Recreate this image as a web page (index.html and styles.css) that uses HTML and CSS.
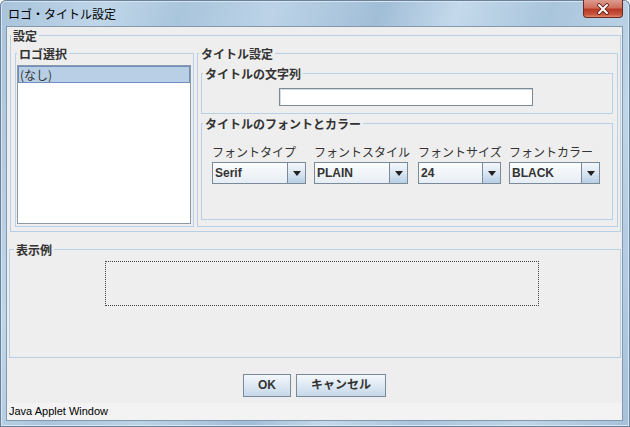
FILE: index.html
```html
<!DOCTYPE html>
<html lang="ja">
<head>
    <meta charset="UTF-8">
    <title>ロゴ・タイトル設定</title>
    <link rel="stylesheet" href="styles.css">
</head>
<body>
    <div class="window">
        <div class="titlebar">
            <span class="title">ロゴ・タイトル設定</span>
            <div class="close-btn">
                <svg width="14" height="12" viewBox="0 0 14 12">
                    <path d="M3 2 L11 10 M11 2 L3 10" stroke="#5a1a12" stroke-width="3.6" stroke-linecap="round"/>
                    <path d="M3 2 L11 10 M11 2 L3 10" stroke="#ffffff" stroke-width="2" stroke-linecap="round"/>
                </svg>
            </div>
        </div>

        <div class="client">
            <!-- 設定 -->
            <fieldset class="group group-settings">
                <legend>設定</legend>
                <div class="settings-body">
                    <fieldset class="group group-logo">
                        <legend>ロゴ選択</legend>
                        <div class="logo-body">
                            <div class="list">
                                <div class="list-item selected">(なし)</div>
                            </div>
                        </div>
                    </fieldset>

                    <fieldset class="group group-title">
                        <legend>タイトル設定</legend>
                        <div class="title-body">
                            <fieldset class="group">
                                <legend>タイトルの文字列</legend>
                                <div class="string-body">
                                    <div class="textfield"></div>
                                </div>
                            </fieldset>

                            <fieldset class="group group-font">
                                <legend>タイトルのフォントとカラー</legend>
                                <div class="font-body">
                                    <div class="font-col">
                                        <div class="font-label">フォントタイプ</div>
                                        <div class="combo"><span class="combo-value">Serif</span><span class="combo-arrow"></span></div>
                                    </div>
                                    <div class="font-col">
                                        <div class="font-label">フォントスタイル</div>
                                        <div class="combo combo-style"><span class="combo-value">PLAIN</span><span class="combo-arrow"></span></div>
                                    </div>
                                    <div class="font-col">
                                        <div class="font-label">フォントサイズ</div>
                                        <div class="combo"><span class="combo-value">24</span><span class="combo-arrow"></span></div>
                                    </div>
                                    <div class="font-col">
                                        <div class="font-label">フォントカラー</div>
                                        <div class="combo"><span class="combo-value">BLACK</span><span class="combo-arrow"></span></div>
                                    </div>
                                </div>
                            </fieldset>
                        </div>
                    </fieldset>
                </div>
            </fieldset>

            <!-- 表示例 -->
            <fieldset class="group group-preview">
                <legend>表示例</legend>
                <div class="preview-body">
                    <div class="preview-box"></div>
                </div>
            </fieldset>

            <div class="buttons">
                <div class="btn">OK</div>
                <div class="btn">キャンセル</div>
            </div>

            <div class="statusbar">Java Applet Window</div>
        </div>
    </div>
</body>
</html>
```

FILE: styles.css
```css
* {
    box-sizing: border-box;
}

body {
    margin: 0;
    width: 630px;
    height: 427px;
    overflow: hidden;
    font-family: "Liberation Sans", "Noto Sans CJK JP", sans-serif;
    font-size: 12px;
    color: #333;
}

.window {
    width: 630px;
    height: 427px;
    display: flex;
    flex-direction: column;
    border-radius: 6px 6px 0 0;
    background: linear-gradient(108deg, #a7c3db 0%, #c0d6e9 14%, #a9c5dc 24%, #bcd3e7 36%, #a1bed7 50%, #c4d9eb 60%, #a9c5dc 72%, #bfd5e8 86%, #a5c1d9 100%);
    box-shadow: inset 0 0 0 1px #6a8299, inset 0 0 0 2px #d9e6f1;
}

.titlebar {
    height: 27px;
    display: flex;
    justify-content: space-between;
    align-items: flex-start;
    padding-left: 8px;
}

.title {
    font-family: "Noto Sans CJK JP", sans-serif;
    font-size: 12px;
    line-height: 27px;
    color: #000;
}

.close-btn {
    width: 40px;
    height: 18px;
    margin-right: 7px;
    border: 1px solid #6b2a22;
    border-top: none;
    border-radius: 0 0 4px 4px;
    background: linear-gradient(#dc9c8e 0%, #d0705e 45%, #b73a26 55%, #c9553d 85%, #de8a6c 100%);
    display: flex;
    align-items: center;
    justify-content: center;
}

.client {
    margin: 0 8px 7px 7px;
    height: 393px;
    background: #eeeeee;
    box-shadow: 0 0 0 1px #8398ad;
    display: flex;
    flex-direction: column;
    padding-top: 2px;
}

/* titled borders */
.group {
    margin: 0;
    padding: 0;
    min-width: 0;
    border: 1px solid #b8cfe5;
}

.group legend {
    margin-left: 1px;
    padding: 0 2px;
    font-family: "Noto Sans CJK JP", sans-serif;
    font-size: 12px;
    font-weight: bold;
    line-height: 13px;
    color: #333;
}

.group-settings {
    margin-left: 3px;
    width: 611px;
}

.group-settings > legend {
    margin-left: 0;
}

.settings-body {
    display: flex;
    gap: 3px;
    padding: 5px 2px 4px 4px;
}

.group-logo {
    width: 179px;
    height: 180px;
}

.logo-body {
    padding: 5px 2px 2px 1px;
}

.list {
    height: 159px;
    background: #ffffff;
    border: 1px solid #8c99a6;
}

.list-item {
    height: 17px;
    line-height: 15px;
    padding-left: 1px;
    font-family: "Noto Sans CJK JP", sans-serif;
    color: #333;
}

.list-item.selected {
    background: #b8cfe5;
    border: 1px solid #6f8fc0;
}

.group-title {
    width: 421px;
    height: 180px;
}

.title-body {
    display: flex;
    flex-direction: column;
    gap: 3px;
    padding: 7px 4px 6px 3px;
}

.string-body {
    display: flex;
    justify-content: center;
    padding: 8px 2px 7px 0;
}

.textfield {
    width: 254px;
    height: 18px;
    background: #ffffff;
    border: 1px solid #7a8a99;
    box-shadow: inset 1px 1px 0 #d4dbe2;
}

.font-body {
    display: grid;
    grid-template-columns: 94px 96px 83px 91px;
    gap: 8px;
    padding: 14px 0 35px 10px;
}

.font-label {
    font-family: "Noto Sans CJK JP", sans-serif;
    font-size: 12px;
    line-height: 15px;
    white-space: nowrap;
    color: #333;
    margin-bottom: 3px;
}

.combo {
    display: flex;
    height: 22px;
    border: 1px solid #7a8a99;
    background: linear-gradient(#fbfcfd, #e6edf4);
}

.combo-style {
    width: 94px;
}

.combo-value {
    flex: 1;
    padding-left: 2px;
    font-weight: bold;
    font-size: 12px;
    line-height: 20px;
    color: #333;
}

.combo-arrow {
    width: 18px;
    border-left: 1px solid #7a8a99;
    background: linear-gradient(#f3f7fa 0%, #dde8f3 45%, #b8cfe5 100%);
    display: flex;
    align-items: center;
    justify-content: center;
}

.combo-arrow::before {
    content: "";
    border-left: 4px solid transparent;
    border-right: 4px solid transparent;
    border-top: 5px solid #222;
}

.group-preview {
    margin: 11px 0 0 2px;
    width: 612px;
}

.group-preview > legend {
    margin-left: 4px;
}

.preview-body {
    padding: 5px 0 51px 95px;
}

.preview-box {
    width: 434px;
    height: 45px;
    border: 1px dotted #444;
}

.buttons {
    display: flex;
    justify-content: center;
    gap: 5px;
    margin-top: 16px;
}

.btn {
    height: 23px;
    padding: 0 14px;
    border: 1px solid #7a8a99;
    background: linear-gradient(#f4f8fb 0%, #dde8f3 50%, #c6d8e9 100%);
    font-family: "Liberation Sans", "Noto Sans CJK JP", sans-serif;
    font-weight: bold;
    font-size: 12px;
    line-height: 21px;
    color: #333;
}

.statusbar {
    margin-top: 6px;
    height: 17px;
    padding-left: 2px;
    background: #f3f3f3;
    font-family: "Liberation Sans", sans-serif;
    font-size: 11px;
    line-height: 17px;
    color: #000;
}
```
